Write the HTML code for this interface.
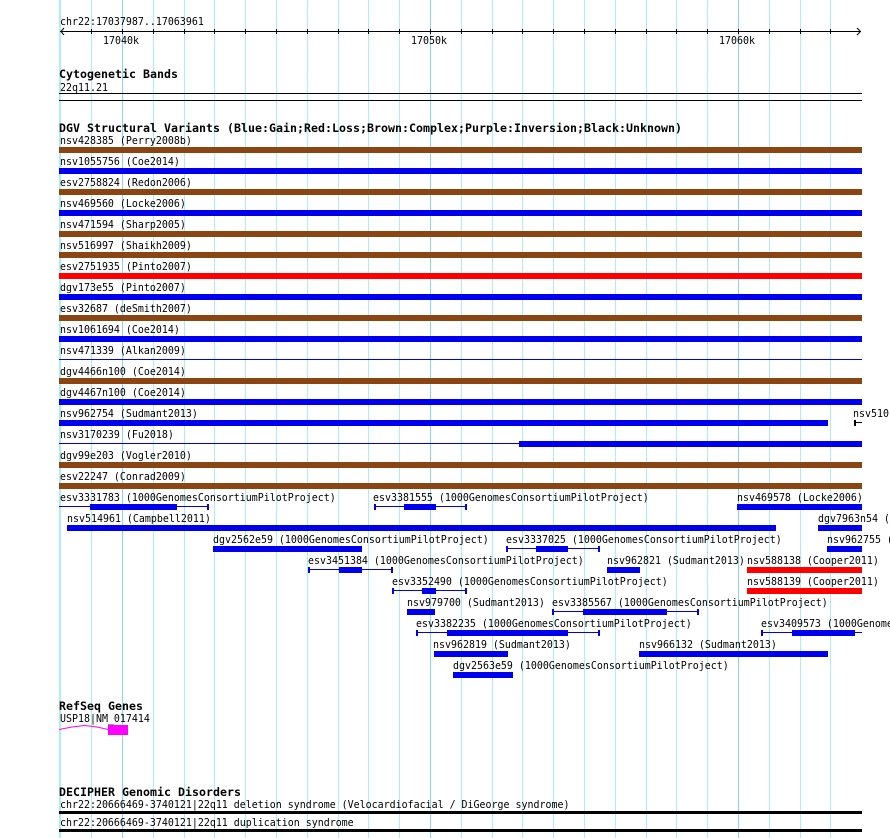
<!DOCTYPE html>
<html><head><meta charset="utf-8"><style>
html,body{margin:0;padding:0;background:#fff;width:890px;height:838px;overflow:hidden}
svg{display:block}
text{font-family:"DejaVu Sans Mono","Liberation Mono",monospace;font-size:11px;fill:#000;white-space:pre;transform-box:fill-box;transform-origin:0 0;transform:scaleX(.906)}
text.b{font-weight:bold;font-size:11.6px;letter-spacing:.02px;transform:none}
</style></head><body>
<svg width="890" height="838" viewBox="0 0 890 838" xmlns="http://www.w3.org/2000/svg" shape-rendering="crispEdges">
<g fill="#aeeef0">
<rect x="59" y="0" width="2" height="838"/><rect x="91" y="0" width="1" height="838"/><rect x="153" y="0" width="1" height="838"/><rect x="184" y="0" width="1" height="838"/><rect x="214" y="0" width="1" height="838"/><rect x="245" y="0" width="1" height="838"/><rect x="276" y="0" width="1" height="838"/><rect x="307" y="0" width="1" height="838"/><rect x="338" y="0" width="1" height="838"/><rect x="368" y="0" width="1" height="838"/><rect x="399" y="0" width="1" height="838"/><rect x="461" y="0" width="1" height="838"/><rect x="492" y="0" width="1" height="838"/><rect x="522" y="0" width="1" height="838"/><rect x="553" y="0" width="1" height="838"/><rect x="584" y="0" width="1" height="838"/><rect x="615" y="0" width="1" height="838"/><rect x="646" y="0" width="1" height="838"/><rect x="676" y="0" width="1" height="838"/><rect x="707" y="0" width="1" height="838"/><rect x="769" y="0" width="1" height="838"/><rect x="800" y="0" width="1" height="838"/><rect x="830" y="0" width="1" height="838"/>
</g>
<g fill="#87d7ee"><rect x="122" y="0" width="1" height="838"/><rect x="430" y="0" width="1" height="838"/><rect x="738" y="0" width="1" height="838"/></g>

<text x="60" y="25">chr22:17037987..17063961</text>
<g fill="#000">
<rect x="60" y="31" width="801" height="1"/>
<rect x="91" y="29" width="1" height="5"/><rect x="122" y="29" width="1" height="5"/><rect x="153" y="29" width="1" height="5"/><rect x="184" y="29" width="1" height="5"/><rect x="214" y="29" width="1" height="5"/><rect x="245" y="29" width="1" height="5"/><rect x="276" y="29" width="1" height="5"/><rect x="307" y="29" width="1" height="5"/><rect x="338" y="29" width="1" height="5"/><rect x="368" y="29" width="1" height="5"/><rect x="399" y="29" width="1" height="5"/><rect x="430" y="29" width="1" height="5"/><rect x="461" y="29" width="1" height="5"/><rect x="492" y="29" width="1" height="5"/><rect x="522" y="29" width="1" height="5"/><rect x="553" y="29" width="1" height="5"/><rect x="584" y="29" width="1" height="5"/><rect x="615" y="29" width="1" height="5"/><rect x="646" y="29" width="1" height="5"/><rect x="676" y="29" width="1" height="5"/><rect x="707" y="29" width="1" height="5"/><rect x="738" y="29" width="1" height="5"/><rect x="769" y="29" width="1" height="5"/><rect x="800" y="29" width="1" height="5"/><rect x="830" y="29" width="1" height="5"/>
</g>
<path d="M64 28L61 31.5L64 35M857 28L860.5 31.5L857 35" fill="none" stroke="#000" stroke-width="1" shape-rendering="auto"/>
<text x="103" y="44">17040k</text><text x="411" y="44">17050k</text><text x="719" y="44">17060k</text>

<text class="b" x="59" y="78">Cytogenetic Bands</text>
<text x="60" y="91">22q11.21</text>
<rect x="59" y="93" width="803" height="1" fill="#000"/><rect x="59" y="100" width="803" height="1" fill="#000"/>

<text class="b" x="59" y="132">DGV Structural Variants (Blue:Gain;Red:Loss;Brown:Complex;Purple:Inversion;Black:Unknown)</text>

<text x="60" y="144">nsv428385 (Perry2008b)</text><rect x="59" y="147" width="803" height="6" fill="#8b4513"/>
<text x="60" y="165">nsv1055756 (Coe2014)</text><rect x="59" y="168" width="803" height="6" fill="#0000ee"/>
<text x="60" y="186">esv2758824 (Redon2006)</text><rect x="59" y="189" width="803" height="6" fill="#8b4513"/>
<text x="60" y="207">nsv469560 (Locke2006)</text><rect x="59" y="210" width="803" height="6" fill="#0000ee"/>
<text x="60" y="228">nsv471594 (Sharp2005)</text><rect x="59" y="231" width="803" height="6" fill="#8b4513"/>
<text x="60" y="249">nsv516997 (Shaikh2009)</text><rect x="59" y="252" width="803" height="6" fill="#8b4513"/>
<text x="60" y="270">esv2751935 (Pinto2007)</text><rect x="59" y="273" width="803" height="6" fill="#ff0000"/>
<text x="60" y="291">dgv173e55 (Pinto2007)</text><rect x="59" y="294" width="803" height="6" fill="#0000ee"/>
<text x="60" y="312">esv32687 (deSmith2007)</text><rect x="59" y="315" width="803" height="6" fill="#8b4513"/>
<text x="60" y="333">nsv1061694 (Coe2014)</text><rect x="59" y="336" width="803" height="6" fill="#0000ee"/>
<text x="60" y="354">nsv471339 (Alkan2009)</text><rect x="59" y="359" width="803" height="1" fill="#0000ee"/>
<text x="60" y="375">dgv4466n100 (Coe2014)</text><rect x="59" y="378" width="803" height="6" fill="#8b4513"/>
<text x="60" y="396">dgv4467n100 (Coe2014)</text><rect x="59" y="399" width="803" height="6" fill="#0000ee"/>
<text x="60" y="417">nsv962754 (Sudmant2013)</text><rect x="59" y="420" width="769" height="6" fill="#0000ee"/>
<text x="853" y="417">nsv510</text><rect x="854" y="420" width="2" height="6" fill="#000"/><rect x="854" y="422" width="8" height="1" fill="#000"/>
<text x="60" y="438">nsv3170239 (Fu2018)</text><rect x="59" y="443" width="460" height="1" fill="#0000ee"/><rect x="519" y="441" width="343" height="6" fill="#0000ee"/>
<text x="60" y="459">dgv99e203 (Vogler2010)</text><rect x="59" y="462" width="803" height="6" fill="#8b4513"/>
<text x="60" y="480">esv22247 (Conrad2009)</text><rect x="59" y="483" width="803" height="6" fill="#8b4513"/>

<text x="60" y="501">esv3331783 (1000GenomesConsortiumPilotProject)</text>
<g fill="#0000ee"><rect x="59" y="506" width="149" height="1"/><rect x="207" y="504" width="2" height="6"/><rect x="90" y="504" width="87" height="6"/></g>
<text x="373" y="501">esv3381555 (1000GenomesConsortiumPilotProject)</text>
<g fill="#0000ee"><rect x="374" y="506" width="92" height="1"/><rect x="374" y="504" width="2" height="6"/><rect x="465" y="504" width="2" height="6"/><rect x="404" y="504" width="32" height="6"/></g>
<text x="737" y="501">nsv469578 (Locke2006)</text><rect x="737" y="504" width="125" height="6" fill="#0000ee"/>

<text x="67" y="522">nsv514961 (Campbell2011)</text><rect x="67" y="525" width="709" height="6" fill="#0000ee"/>
<text x="818" y="522">dgv7963n54 (</text><rect x="818" y="525" width="44" height="6" fill="#0000ee"/>

<text x="213" y="543">dgv2562e59 (1000GenomesConsortiumPilotProject)</text><rect x="213" y="546" width="149" height="6" fill="#0000ee"/>
<text x="506" y="543">esv3337025 (1000GenomesConsortiumPilotProject)</text>
<g fill="#0000ee"><rect x="506" y="548" width="93" height="1"/><rect x="506" y="546" width="2" height="6"/><rect x="598" y="546" width="2" height="6"/><rect x="536" y="546" width="32" height="6"/></g>
<text x="827" y="543">nsv962755 (</text><rect x="827" y="546" width="35" height="6" fill="#0000ee"/>

<text x="308" y="564">esv3451384 (1000GenomesConsortiumPilotProject)</text>
<g fill="#0000ee"><rect x="308" y="569" width="84" height="1"/><rect x="308" y="567" width="2" height="6"/><rect x="391" y="567" width="2" height="6"/><rect x="339" y="567" width="23" height="6"/></g>
<text x="607" y="564">nsv962821 (Sudmant2013)</text><rect x="607" y="567" width="33" height="6" fill="#0000ee"/>
<text x="747" y="564">nsv588138 (Cooper2011)</text><rect x="747" y="567" width="115" height="6" fill="#ff0000"/>

<text x="392" y="585">esv3352490 (1000GenomesConsortiumPilotProject)</text>
<g fill="#0000ee"><rect x="393" y="590" width="73" height="1"/><rect x="392" y="588" width="2" height="6"/><rect x="465" y="588" width="2" height="6"/><rect x="422" y="588" width="14" height="6"/></g>
<text x="747" y="585">nsv588139 (Cooper2011)</text><rect x="747" y="588" width="115" height="6" fill="#ff0000"/>

<text x="407" y="606">nsv979700 (Sudmant2013)</text><rect x="407" y="609" width="28" height="6" fill="#0000ee"/>
<text x="552" y="606">esv3385567 (1000GenomesConsortiumPilotProject)</text>
<g fill="#0000ee"><rect x="552" y="611" width="146" height="1"/><rect x="552" y="609" width="2" height="6"/><rect x="697" y="609" width="2" height="6"/><rect x="583" y="609" width="84" height="6"/></g>

<text x="416" y="627">esv3382235 (1000GenomesConsortiumPilotProject)</text>
<g fill="#0000ee"><rect x="416" y="632" width="183" height="1"/><rect x="416" y="630" width="2" height="6"/><rect x="598" y="630" width="2" height="6"/><rect x="447" y="630" width="121" height="6"/></g>
<text x="761" y="627">esv3409573 (1000Genome</text>
<g fill="#0000ee"><rect x="761" y="632" width="101" height="1"/><rect x="761" y="630" width="2" height="6"/><rect x="792" y="630" width="63" height="6"/></g>

<text x="433" y="648">nsv962819 (Sudmant2013)</text><rect x="434" y="651" width="74" height="6" fill="#0000ee"/>
<text x="639" y="648">nsv966132 (Sudmant2013)</text><rect x="639" y="651" width="189" height="6" fill="#0000ee"/>

<text x="453" y="669">dgv2563e59 (1000GenomesConsortiumPilotProject)</text><rect x="453" y="672" width="60" height="6" fill="#0000ee"/>

<text class="b" x="59" y="710">RefSeq Genes</text>
<text x="60" y="722">USP18|NM_017414</text>
<path d="M59 729.5L72 727L85 725.5L97 727L108 729.5" fill="none" stroke="#ff00ff" stroke-width="1" shape-rendering="auto"/>
<rect x="108" y="725" width="20" height="10" fill="#ff00ff"/>

<text class="b" x="59" y="796">DECIPHER Genomic Disorders</text>
<text x="60" y="808">chr22:20666469-3740121|22q11 deletion syndrome (Velocardiofacial / DiGeorge syndrome)</text>
<rect x="59" y="811" width="803" height="3" fill="#000"/>
<text x="60" y="826">chr22:20666469-3740121|22q11 duplication syndrome</text>
<rect x="59" y="829" width="803" height="3" fill="#000"/>
</svg>
</body></html>
